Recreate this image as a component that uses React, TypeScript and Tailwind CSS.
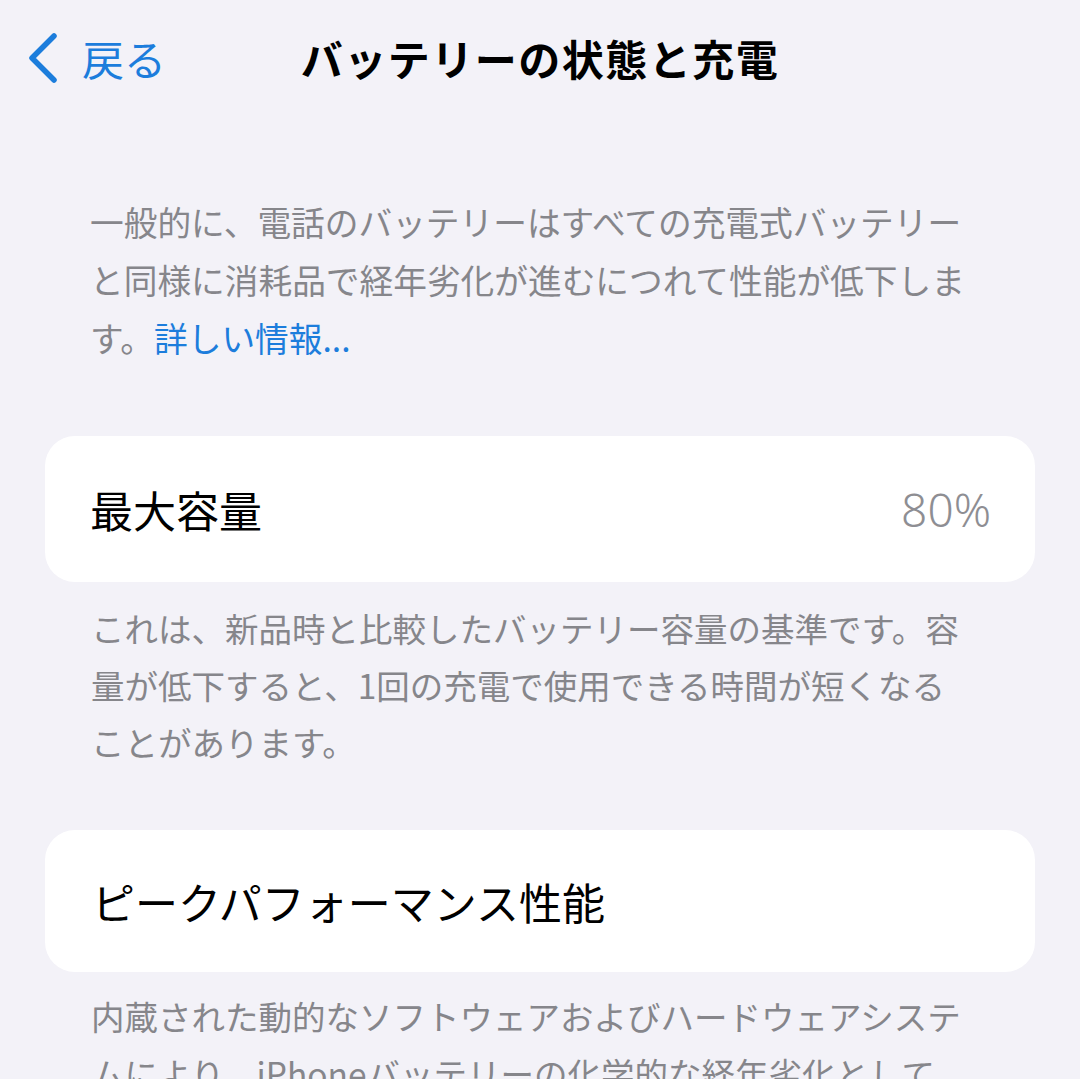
import React from "react";

const font = { fontFamily: '"Noto Sans CJK JP", "Noto Sans", sans-serif' };

export default function App() {
  return (
    <div className="w-[1080px] h-[1079px] overflow-hidden bg-[#f3f2f8]" style={font}>
      <div className="grid grid-cols-[1fr_auto_1fr] items-center h-[116px]">
        <div className="flex items-center pl-[24px] gap-[22px] text-[#1c7ddc]">
          <svg width="36" height="52" viewBox="0 0 36 52" fill="none">
            <polyline points="30,4 8,26 30,48" stroke="#1c7ddc" strokeWidth="5.5" strokeLinecap="round" strokeLinejoin="round" />
          </svg>
          <span className="text-[42px] leading-none">戻る</span>
        </div>
        <div className="text-[42px] font-bold text-black leading-none tracking-[1.5px]">バッテリーの状態と充電</div>
        <div />
      </div>

      <p className="mt-[77px] px-[90px] text-[33.7px] leading-[58px] text-[#86868b]">
        一般的に、電話のバッテリーはすべての充電式バッテリー<br />
        と同様に消耗品で経年劣化が進むにつれて性能が低下しま<br />
        す。<span className="text-[#1c7ddc]">詳しい情報...</span>
      </p>

      <div className="mt-[69px] mx-[45px] h-[146px] rounded-[30px] bg-white flex items-center justify-between pl-[45px] pr-[44px]">
        <span className="text-[43px] text-black">最大容量</span>
        <span className="text-[46px] font-light text-[#8e8e93]" style={{ fontFamily: '"Noto Sans", "Liberation Sans", sans-serif' }}>80%</span>
      </div>

      <p className="mt-[17px] px-[91px] text-[33.5px] leading-[57px] text-[#86868b]">
        これは、新品時と比較したバッテリー容量の基準です。容<br />
        量が低下すると、1回の充電で使用できる時間が短くなる<br />
        ことがあります。
      </p>

      <div className="mt-[60px] mx-[45px] h-[142px] rounded-[30px] bg-white flex items-center px-[47px]">
        <span className="text-[43px] text-black">ピークパフォーマンス性能</span>
      </div>

      <p className="mt-[15px] px-[91px] text-[33.5px] leading-[57px] text-[#86868b]">
        内蔵された動的なソフトウェアおよびハードウェアシステ<br />
        ムにより、iPhoneバッテリーの化学的な経年劣化として<br />
        現れる可能性のあるパフォーマンスへの影響が軽減されま<br />
        す。
      </p>
    </div>
  );
}
